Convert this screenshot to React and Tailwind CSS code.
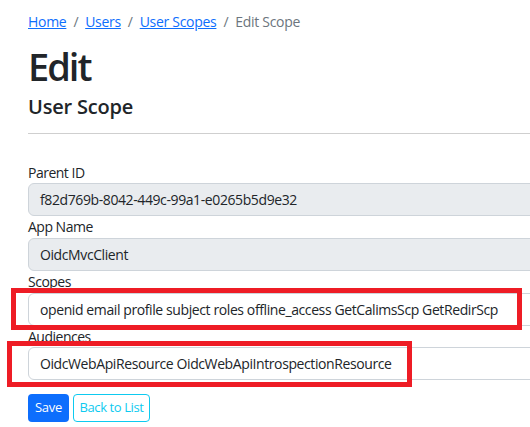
export default function App() {
  const font = { fontFamily: '"Open Sans", "Noto Sans", sans-serif' };
  const inputBase =
    "h-[33px] w-[540px] rounded-[6px] border border-[#ced4da] px-[11px] flex items-center whitespace-nowrap tracking-[-0.4px]";
  return (
    <div className="w-[530px] h-[427px] overflow-hidden bg-white text-[#212529]" style={font}>
      <div className="pl-[28px]">
        <nav className="h-[42px] text-[14px] flex items-center gap-[7px] text-[#6c757d] tracking-[-0.3px]">
          <a className="text-[#0d6efd] underline" href="#">Home</a>
          <span>/</span>
          <a className="text-[#0d6efd] underline" href="#">Users</a>
          <span>/</span>
          <a className="text-[#0d6efd] underline" href="#">User Scopes</a>
          <span>/</span>
          <span>Edit Scope</span>
        </nav>
        <h1 className="text-[38px] font-semibold leading-[44px] mt-[2px] tracking-[-2px]">Edit</h1>
        <h5 className="text-[20px] font-semibold leading-[26px] mt-[6px] tracking-[-0.2px]">User Scope</h5>
        <hr className="mt-[13px] border-t border-[#cfcfcf]" />
        <div className="mt-[28px] text-[14px]">
          <label className="block h-[21px] leading-[21px] tracking-[-0.5px]">Parent ID</label>
          <div className={inputBase + " bg-[#e9ecef]"}>f82d769b-8042-449c-99a1-e0265b5d9e32</div>
          <label className="block h-[22px] leading-[22px] tracking-[-0.5px]">App Name</label>
          <div className={inputBase + " bg-[#e9ecef]"}>OidcMvcClient</div>
          <label className="block h-[22px] leading-[22px] tracking-[-0.5px]">Scopes</label>
          <div className="relative">
            <div className={inputBase + " bg-white"}>openid email profile subject roles offline_access GetCalimsScp GetRedirScp</div>
            <div className="absolute left-[-17px] top-[-5px] w-[511px] h-[42px] border-[5px] border-[#ee1c25]"></div>
          </div>
          <label className="block h-[21px] leading-[21px] tracking-[-0.5px]">Audiences</label>
          <div className="relative">
            <div className={inputBase + " bg-white"}>OidcWebApiResource OidcWebApiIntrospectionResource</div>
            <div className="absolute left-[-21px] top-[-6px] w-[405px] h-[46px] border-[5px] border-[#ee1c25]"></div>
          </div>
          <div className="mt-[14px] flex gap-[4px]">
            <button className="h-[28px] w-[41px] rounded-[4px] bg-[#0d6efd] text-white text-[13px] tracking-[-0.3px]">Save</button>
            <button className="h-[28px] w-[77px] rounded-[4px] border border-[#0dcaf0] text-[#0dcaf0] text-[13px] tracking-[-0.4px]">Back to List</button>
          </div>
        </div>
      </div>
    </div>
  );
}
